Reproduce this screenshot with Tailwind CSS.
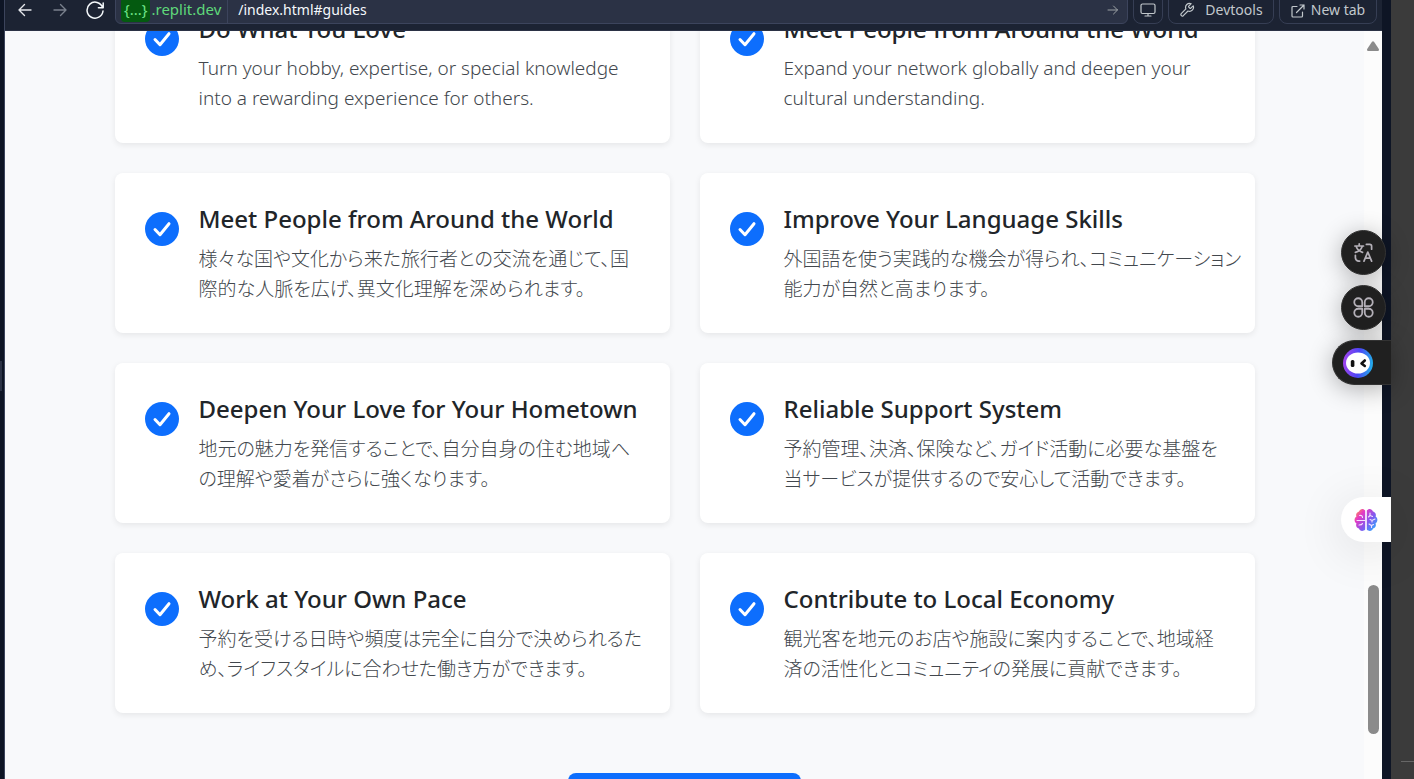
<!DOCTYPE html>
<html lang="en">
<head>
<meta charset="utf-8">
<title>Guides</title>
<script src="https://cdn.jsdelivr.net/npm/@tailwindcss/browser@4"></script>
</head>
<body class="relative flex h-screen overflow-hidden bg-[#0e1525] font-['Noto_Sans','Noto_Sans_CJK_JP',sans-serif]">
<svg class="hidden" aria-hidden="true">
  <symbol id="check" viewBox="0 0 34 34"><circle cx="17" cy="17" r="17" fill="#0d6efd"/><path d="M10 17.500l5 5.200 9-11" fill="none" stroke="#fff" stroke-width="3" stroke-linecap="round" stroke-linejoin="round"/></symbol>
</svg>

<div class="flex w-1 shrink-0 items-center pb-7"><div class="h-[30px] w-0.5 bg-[#2b3245]"></div></div>

<div class="flex min-w-0 flex-1 flex-col border-l border-[#3c445c]">
  <header class="flex h-[31px] shrink-0 items-end overflow-hidden border-b border-[#2b3245] bg-[#1c2333] pb-1.5 font-['Noto_Sans',sans-serif] text-[15px] text-[#c2c8cc]">
    <button aria-label="Back" class="ml-2.5 flex h-7 w-5 items-center justify-center text-[#e4e6eb]"><svg width="16" height="16" viewBox="0 0 16 16" fill="none" stroke="currentColor" stroke-width="1.400" stroke-linecap="round" stroke-linejoin="round"><path d="M14 8H2M7.500 2.500L2 8l5.500 5.500"/></svg></button>
    <button aria-label="Forward" class="ml-[15px] flex h-7 w-5 items-center justify-center text-[#79808d]"><svg width="16" height="16" viewBox="0 0 16 16" fill="none" stroke="currentColor" stroke-width="1.400" stroke-linecap="round" stroke-linejoin="round"><path d="M2 8h12M8.500 2.500L14 8l-5.500 5.500"/></svg></button>
    <button aria-label="Reload" class="ml-[15px] flex h-7 w-5 items-center justify-center text-[#f5f9fc]"><svg width="20" height="20" viewBox="0 0 20 20" fill="none" stroke="currentColor" stroke-width="1.500" stroke-linecap="round" stroke-linejoin="round"><path d="M18.200 3v4.800h-4.800M17.600 7.500A8 8 0 1 0 18 11"/></svg></button>
    <div class="ml-2.5 flex h-8 min-w-0 flex-1 items-end overflow-hidden rounded-md border border-[#3c445c] bg-[#2b3245]">
      <div class="flex h-[27px] items-center pr-1.5 pl-[5px] text-[#5fd97a]"><span class="flex h-6 items-center rounded bg-[#045a10] px-[3px] text-[#6fe489]">{...}</span><span class="ml-px">.replit.dev</span></div>
      <input aria-label="Page address" value="/index.html#guides" class="h-[27px] min-w-0 flex-1 border-l border-[#3c445c] bg-transparent pl-2.5 text-sm text-[#f5f9fc] outline-none">
      <button aria-label="Go" class="flex h-[27px] w-7 items-center justify-center text-[#9da2a6]"><svg width="12" height="12" viewBox="0 0 12 12" fill="none" stroke="currentColor" stroke-linecap="round" stroke-linejoin="round"><path d="M1 6h9.500M6.500 2l4 4-4 4"/></svg></button>
    </div>
    <button aria-label="Screen size" class="ml-[5px] flex h-8 w-[30px] items-end justify-center rounded-lg border border-[#363e54] pb-[5px]"><svg width="16" height="16" viewBox="0 0 16 16" fill="none" stroke="currentColor" stroke-width="1.200" stroke-linecap="round" stroke-linejoin="round"><rect x="1" y="2" width="14" height="9.500" rx="1.500"/><path d="M8 11.500V14M5 14h6"/></svg></button>
    <button class="ml-[5px] flex h-9 w-[106px] items-end justify-center gap-2.5 rounded-lg border border-[#363e54] pb-[3px] text-sm"><svg class="mb-0.5" width="16" height="16" viewBox="0 0 16 16" fill="none" stroke="currentColor" stroke-width="1.200" stroke-linecap="round" stroke-linejoin="round"><path d="M9.800 4.200a.8.800 0 0 0 0 1l1 1a.8.800 0 0 0 1 0l2.400-2.400a4 4 0 0 1-5.200 5.200l-4.700 4.700a1.500 1.500 0 0 1-2.100-2.100L6.900 6.900a4 4 0 0 1 5.300-5.200z"/></svg>Devtools</button>
    <button class="mx-[5px] flex h-9 w-[98px] items-end justify-center gap-1.5 rounded-lg border border-[#363e54] pb-[3px] text-sm"><svg class="mb-0.5" width="14" height="14" viewBox="0 0 14 14" fill="none" stroke="currentColor" stroke-width="1.200" stroke-linecap="round" stroke-linejoin="round"><path d="M6 2.500H2A1 1 0 0 0 1 3.500V12a1 1 0 0 0 1 1h8.500a1 1 0 0 0 1-1V8M9 1h4v4M13 1L5.500 8.500"/></svg>New tab</button>
  </header>

  <div class="flex min-h-0 flex-1 overflow-hidden bg-[#f8f9fb]">
    <main class="min-w-0 flex-1">
      <div class="mx-auto -mt-12 grid max-w-[1140px] grid-cols-2 gap-[30px] text-[19px] leading-[30px] font-light text-[#42474d] [&_article]:flex [&_article]:gap-5 [&_article]:rounded-lg [&_article]:bg-white [&_article]:p-[30px] [&_article]:shadow-[0_2px_6px_rgba(0,0,0,0.08)] [&_h3]:mb-2 [&_h3]:text-2xl [&_h3]:leading-8 [&_h3]:font-medium [&_h3]:text-[#212529] [&_h3]:whitespace-nowrap [&_p]:whitespace-nowrap [&_svg]:mt-[9px] [&_svg]:size-[34px] [&_svg]:shrink-0">
        <article><svg><use href="#check"/></svg><div><h3>Do What You Love</h3><p>Turn your hobby, expertise, or special knowledge<br>into a rewarding experience for others.</p></div></article>
        <article><svg><use href="#check"/></svg><div><h3>Meet People from Around the World</h3><p>Expand your network globally and deepen your<br>cultural understanding.</p></div></article>
        <article><svg><use href="#check"/></svg><div><h3>Meet People from Around the World</h3><p lang="ja" class="font-['Noto_Sans_CJK_JP',sans-serif] [font-feature-settings:'palt']">様々な国や文化から来た旅行者との交流を通じて、国<br>際的な人脈を広げ、異文化理解を深められます。</p></div></article>
        <article><svg><use href="#check"/></svg><div><h3>Improve Your Language Skills</h3><p lang="ja" class="font-['Noto_Sans_CJK_JP',sans-serif] [font-feature-settings:'palt']">外国語を使う実践的な機会が得られ、コミュニケーション<br>能力が自然と高まります。</p></div></article>
        <article><svg><use href="#check"/></svg><div><h3>Deepen Your Love for Your Hometown</h3><p lang="ja" class="font-['Noto_Sans_CJK_JP',sans-serif] [font-feature-settings:'palt']">地元の魅力を発信することで、自分自身の住む地域へ<br>の理解や愛着がさらに強くなります。</p></div></article>
        <article><svg><use href="#check"/></svg><div><h3>Reliable Support System</h3><p lang="ja" class="font-['Noto_Sans_CJK_JP',sans-serif] [font-feature-settings:'palt']">予約管理、決済、保険など、ガイド活動に必要な基盤を<br>当サービスが提供するので安心して活動できます。</p></div></article>
        <article><svg><use href="#check"/></svg><div><h3>Work at Your Own Pace</h3><p lang="ja" class="font-['Noto_Sans_CJK_JP',sans-serif] [font-feature-settings:'palt']">予約を受ける日時や頻度は完全に自分で決められるた<br>め、ライフスタイルに合わせた働き方ができます。</p></div></article>
        <article><svg><use href="#check"/></svg><div><h3>Contribute to Local Economy</h3><p lang="ja" class="font-['Noto_Sans_CJK_JP',sans-serif] [font-feature-settings:'palt']">観光客を地元のお店や施設に案内することで、地域経<br>済の活性化とコミュニティの発展に貢献できます。</p></div></article>
      </div>
      <button aria-label="Register as a guide" class="mx-auto mt-[60px] block h-12 w-[233px] rounded-lg bg-[#0d6efd]"></button>
    </main>
    <div class="flex w-[18px] shrink-0 flex-col items-center bg-[#fcfcfc] pt-2.5">
      <svg width="14" height="11" viewBox="0 0 14 11" fill="#8b8b8b"><path d="M6 .8q1-1 2 0L12.800 8q.6 2-1 2H2.200Q.6 10 1.200 8z"/></svg>
      <div class="mt-auto ml-1 mb-[45px] h-[149px] w-[11px] self-start rounded-full bg-[#8b8b8b]"></div>
    </div>
  </div>
</div>

<div class="w-[9px] shrink-0"></div>
<aside class="flex w-[23px] shrink-0 flex-col items-end justify-end bg-[#3b3b3b] pb-[17px]"><div class="h-px w-[13px] bg-[#666]"></div></aside>

<div class="absolute top-[230px] right-[23px] flex flex-col items-end gap-2.5">
  <button aria-label="Translate" class="mr-[5px] flex size-[45px] items-center justify-center rounded-full border border-[#333] bg-[#202020] text-[#b4b0b8] shadow-[0_4px_24px_rgba(0,0,0,0.3)]"><svg width="21" height="21" viewBox="0 0 22 22" fill="none" stroke="currentColor" stroke-width="1.800" stroke-linecap="round" stroke-linejoin="round"><path d="M2 4.200h9M6.500 2v2M3.500 5c.8 2.500 3.200 4.800 6.500 5.800M9.500 5C8.700 7.500 6 10 2.500 10.800M14 2.500h3.500a2 2 0 0 1 2 2V7.500M2.500 14v2.500a3.500 3.500 0 0 0 3.500 3.500h1M11.500 20l4-9.500 4 9.500M13 17h5"/></svg></button>
  <button aria-label="Apps" class="mr-[5px] flex size-[45px] items-center justify-center rounded-full border border-[#333] bg-[#202020] text-[#b4b0b8] shadow-[0_4px_24px_rgba(0,0,0,0.3)]"><svg width="21" height="21" viewBox="0 0 20 20" fill="none" stroke="currentColor" stroke-width="1.700" stroke-linejoin="round"><path d="M8.800 8.800H5A3.800 3.800 0 1 1 8.800 5zM11.200 8.800V5A3.800 3.800 0 1 1 15 8.800zM8.800 11.200V15A3.800 3.800 0 1 1 5 11.200zM11.200 11.200H15A3.800 3.800 0 1 1 11.200 15z"/></svg></button>
  <button aria-label="Assistant" class="flex h-[45px] w-[59px] items-center rounded-l-full border border-r-0 border-[#333] bg-[#202020] pl-2.5 shadow-[0_4px_24px_rgba(0,0,0,0.3)]"><svg width="30" height="30" viewBox="0 0 30 30"><defs><linearGradient id="ring" x1="0" y1=".6" x2="1" y2=".7"><stop stop-color="#a044ee"/><stop offset=".5" stop-color="#4b45f5"/><stop offset="1" stop-color="#20b4ea"/></linearGradient></defs><circle cx="15" cy="15" r="15" fill="url(#ring)"/><ellipse cx="15" cy="15" rx="12" ry="10.500" fill="#fff"/><rect x="7.800" y="12" width="3.600" height="7" rx="1.500" fill="#111"/><path d="M21.800 12.500L18.500 15.500l3.300 2.500" fill="none" stroke="#111" stroke-width="2.600" stroke-linecap="round" stroke-linejoin="round"/></svg></button>
</div>

<button aria-label="Brain helper" class="absolute top-[497px] right-[23px] flex h-[45px] w-[50px] items-center rounded-l-full bg-white pl-[13px] shadow-[0_8px_50px_rgba(0,0,0,0.12)]"><svg width="24" height="24" viewBox="0 0 24 24"><defs><linearGradient id="brain" x1="0" y1=".1" x2="1" y2=".9"><stop stop-color="#ff9b45"/><stop offset=".25" stop-color="#e739c3"/><stop offset=".6" stop-color="#8358ef"/><stop offset="1" stop-color="#27b3ff"/></linearGradient></defs><path fill="url(#brain)" d="M11.200 2.500v19C9 24 5.500 23 5 20.500 2.500 20 1.500 17.500 2.500 15.500 0 14 0 10 2.300 8.800 1.500 6 3 4 5 3.500 6 .5 9.500 0 11.200 2.500zM12.800 2.500C14.500 0 18 .5 19 3.500c2 .5 3.500 2.500 2.700 5.300C24 10 24 14 21.500 15.500c1 2 0 4.500-2.500 5C18.500 23 15 24 12.800 21.500z"/><path fill="none" stroke="#f4e4ff" stroke-width="1.100" stroke-linecap="round" d="M3 12.500h8M5.500 7.500q3-.5 3 2M5 17q3 0 3.500-1.500M16 5v2.500l2.500 1M14.500 9l1.500-1.500M21 11l-3 1.500-2-1M18 12.500V14M15 16l2.500 1.500 2-1M17.500 17.500v2"/></svg></button>
</body>
</html>
